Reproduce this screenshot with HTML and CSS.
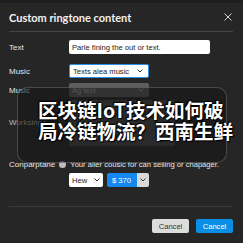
FILE: index.html
```html
<!DOCTYPE html>
<html>
<head>
<meta charset="utf-8">
<link rel="stylesheet" href="styles.css">
</head>
<body>
<div class="dialog">
  <div class="header">
    <div class="title">Custom ringtone content</div>
    <svg class="close" width="8" height="8" viewBox="0 0 8 8"><path d="M0.5 0.5L7.5 7.5M7.5 0.5L0.5 7.5" stroke="#cfcfcf" stroke-width="1"/></svg>
  </div>
  <div class="form">
    <div class="row r-text">
      <div class="label">Text</div>
      <div class="input">Parle fining the out or text.</div>
    </div>
    <div class="row r-music">
      <div class="label">Music</div>
      <div class="select focus"><span>Texts alea music</span><svg class="chev" width="6" height="4" viewBox="0 0 6 4"><path d="M0.5 0.5L3 3L5.5 0.5" stroke="#333" fill="none"/></svg></div>
    </div>
    <div class="row r-music2">
      <div class="label">Music</div>
      <div class="select dark"><span>Ag text</span><svg class="chev" width="6" height="4" viewBox="0 0 6 4"><path d="M0.5 0.5L3 3L5.5 0.5" stroke="#aaa" fill="none"/></svg></div>
    </div>
    <div class="row r-work">
      <div class="label">Worksinge</div>
      <div class="area"></div>
    </div>
    <div class="row r-comp">
      <div class="label">Conparptane</div>
      <div class="radioline"><span class="radio"></span><span>Your aller cousic for can selling or chapager.</span></div>
    </div>
    <div class="row r-hew">
      <div class="label"></div>
      <div class="pair">
        <div class="select small"><span>Hew</span><svg class="chev" width="6" height="4" viewBox="0 0 6 4"><path d="M0.5 0.5L3 3L5.5 0.5" stroke="#333" fill="none"/></svg></div>
        <div class="split"><span class="val">$ 370</span><span class="drop"><svg width="6" height="4" viewBox="0 0 6 4"><path d="M0.5 0.5L3 3L5.5 0.5" stroke="#333" fill="none"/></svg></span></div>
      </div>
    </div>
  </div>
  <div class="footer">
    <button class="btn grey">Cancel</button>
    <button class="btn blue">Cancel</button>
  </div>
  <div class="overlay">
    <div class="headline">区块链IoT技术如何破<br>局冷链物流？西南生鲜</div>
  </div>
</div>
</body>
</html>
```
FILE: styles.css
```css
html, body { margin: 0; padding: 0; }
body {
  width: 243px; height: 243px; overflow: hidden;
  background: #262626;
  font-family: "Liberation Sans", Arial, sans-serif;
  color: #e6e6e6;
}
.dialog {
  position: relative;
  height: 243px;
  box-sizing: border-box;
  border-top: 3px solid #1d1d1d;
  padding: 0 10px 0 9px;
}
.header {
  display: flex; align-items: center; justify-content: space-between;
  height: 28px;
  border-bottom: 1px solid #444;
}
.title {
  font-family: Lato, "Open Sans", sans-serif;
  font-weight: 700; font-size: 11px; color: #f2f2f2;
}
.close { margin-right: 1px; }
.form { padding-top: 8px; }
.row { display: flex; align-items: center; }
.label { width: 60px; font-size: 8px; color: #e6e6e6; flex: none; }
.input {
  width: 141px; height: 14px; box-sizing: border-box;
  background: #fff; border-radius: 2px;
  color: #222; font-size: 7.6px; padding: 0 0 0 3px;
  display: flex; align-items: center;
}
.r-music { margin-top: 10px; }
.select {
  width: 80px; height: 14px; box-sizing: border-box;
  background: #fff; border-radius: 2px;
  color: #222; font-size: 7.6px; padding: 0 5px 0 3px;
  display: flex; align-items: center; justify-content: space-between;
}
.select.focus { border: 1px solid #2c8ee6; }
.r-music2 { margin-top: 5px; }
.select.dark { background: #5e5e5e; color: #b0b0b0; }
.r-work { margin-top: 3px; align-items: flex-start; }
.r-work .label { margin-top: 18px; color: #bbb; }
.area { width: 106px; height: 46px; background: #4a4a4a; }
.r-comp { margin-top: 14px; }
.r-comp .label { width: auto; margin-right: 4px; }
.radioline { display: flex; align-items: center; font-size: 7.6px; color: #e6e6e6; }
.radio { width: 7px; height: 7px; border-radius: 50%; background: #bdbdbd; margin-right: 4px; }
.r-hew { margin-top: 4px; }
.pair { display: flex; gap: 4px; }
.select.small { width: 34px; padding-right: 3px; }
.split { display: flex; height: 14px; border-radius: 2px; overflow: hidden; }
.split .val { background: #1487f0; color: #fff; font-size: 7.6px; width: 30px; display: flex; align-items: center; padding-left: 5px; box-sizing: border-box; }
.split .drop { background: #d9d9d9; width: 12px; display: flex; align-items: center; justify-content: center; }
.footer {
  margin-top: 19px;
  border-top: 1px solid #3a3a3a;
  padding-top: 12px;
  display: flex; justify-content: flex-end; gap: 7px;
}
.btn {
  height: 14px; width: 37px; border: none; border-radius: 2px; padding: 0;
  font-family: "Liberation Sans", Arial, sans-serif; font-size: 7.6px;
}
.btn.grey { background: #dcdcdc; color: #333; }
.btn.blue { background: #0a8fe6; color: #fff; }
.overlay {
  position: absolute; left: 17px; top: 84px; width: 210px; height: 76px;
  box-sizing: border-box;
  border: 1px solid rgba(255,255,255,0.2);
  border-radius: 10px;
  background: rgba(22,22,22,0.6);
}
.headline {
  position: absolute; left: 20px; top: 11px; white-space: nowrap;
  font-family: "Noto Sans CJK SC", sans-serif; font-weight: 700;
  font-size: 19.5px; line-height: 21px; color: #fff;
  text-shadow: 0 0 2px #000, 1px 1px 1px #000, -1px -1px 1px #000;
}
```
